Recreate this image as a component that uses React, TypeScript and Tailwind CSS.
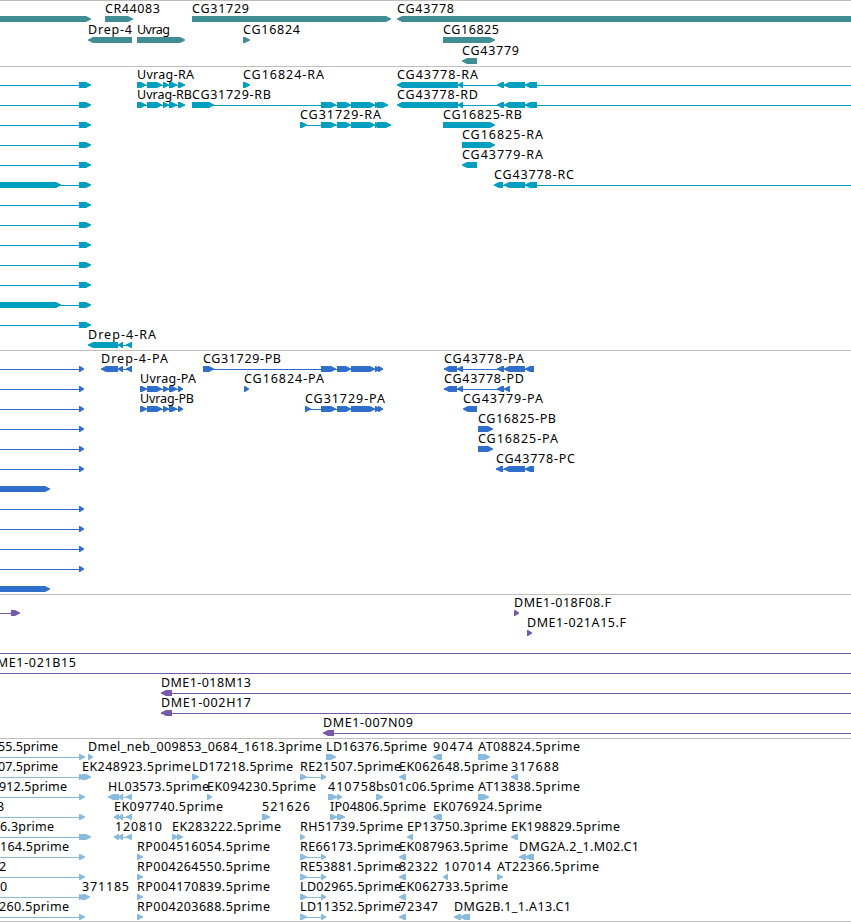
type Exon = [start: number, end: number];
type Label = [x: number, end: number, text: string];

interface Feature {
  dir: 1 | -1;
  exons: Exon[];
  // intron line, when it runs beyond or between the exons
  line?: Exon;
}

interface Row {
  labels?: Label[];
  features?: Feature[];
}

interface TrackProps {
  color: string;
  rows: Row[];
  className: string;
  pitch?: number;
}

const VIEW_WIDTH = 851;

const fwd = (exons: Exon[], line?: Exon): Feature => ({ dir: 1, exons, line });
const rev = (exons: Exon[], line?: Exon): Feature => ({ dir: -1, exons, line });

const genes: Row[] = [
  {
    labels: [[105, 160, 'CR44083'], [192, 249, 'CG31729'], [397, 454, 'CG43778']],
    features: [fwd([[-5, 91]]), fwd([[105, 133]]), fwd([[192, 391]]), rev([[397, 860]])],
  },
  {
    labels: [[88, 132, 'Drep-4'], [137, 170, 'Uvrag'], [243, 300, 'CG16824'], [443, 499, 'CG16825']],
    features: [rev([[88, 132]]), fwd([[137, 185]]), fwd([[243, 250]]), fwd([[443, 495]])],
  },
  {
    labels: [[462, 519, 'CG43779']],
    features: [rev([[462, 477]])],
  },
];

const leftRna = fwd([[79, 91]], [0, 79]);
const leftRnaLong = fwd([[-5, 61], [79, 91]], [0, 79]);
const uvragRna = fwd([[137, 146], [147, 162], [163, 169], [169, 177], [178, 185]], [137, 185]);
const cg43778Rna = rev([[397, 458], [458, 463], [497, 504], [504, 525], [525, 537]], [458, 851]);

const transcripts: Row[] = [
  {
    labels: [[137, 194, 'Uvrag-RA'], [243, 324, 'CG16824-RA'], [397, 478, 'CG43778-RA']],
    features: [leftRna, uvragRna, fwd([[243, 250]]), cg43778Rna],
  },
  {
    labels: [[137, 192, 'Uvrag-RB'], [192, 271, 'CG31729-RB'], [397, 478, 'CG43778-RD']],
    features: [
      leftRna,
      uvragRna,
      fwd([[192, 214], [321, 336], [337, 351], [351, 375], [375, 378], [377, 388]], [192, 388]),
      cg43778Rna,
    ],
  },
  {
    labels: [[300, 381, 'CG31729-RA'], [443, 522, 'CG16825-RB']],
    features: [
      leftRna,
      fwd([[300, 307], [321, 336], [337, 351], [351, 375], [375, 378], [377, 391]], [300, 391]),
      fwd([[443, 495]]),
    ],
  },
  { labels: [[462, 543, 'CG16825-RA']], features: [leftRna, fwd([[462, 495]])] },
  { labels: [[462, 543, 'CG43779-RA']], features: [leftRna, rev([[462, 477]])] },
  {
    labels: [[494, 574, 'CG43778-RC']],
    features: [leftRnaLong, rev([[494, 503], [504, 525], [525, 537]], [494, 851])],
  },
  { features: [leftRna] },
  { features: [leftRna] },
  { features: [leftRna] },
  { features: [leftRna] },
  { features: [leftRna] },
  { features: [leftRnaLong] },
  { features: [leftRna] },
  {
    labels: [[88, 156, 'Drep-4-RA']],
    features: [rev([[88, 118], [118, 123], [126, 132]], [88, 132])],
  },
];

const leftCds = fwd([[79, 84]], [0, 79]);
const leftCdsLong = fwd([[-5, 50]]);
const uvragCds = fwd([[140, 147], [147, 162], [163, 169], [169, 177], [178, 183]], [140, 183]);

const proteins: Row[] = [
  {
    labels: [[101, 168, 'Drep-4-PA'], [203, 281, 'CG31729-PB'], [444, 524, 'CG43778-PA']],
    features: [
      leftCds,
      rev([[101, 118], [118, 123], [126, 132]], [101, 132]),
      fwd([[203, 214], [321, 336], [337, 351], [351, 375], [375, 380], [378, 383]], [203, 383]),
      rev([[444, 457], [457, 463], [497, 504], [504, 525], [525, 534]], [444, 534]),
    ],
  },
  {
    labels: [[140, 196, 'Uvrag-PA'], [244, 324, 'CG16824-PA'], [444, 524, 'CG43778-PD']],
    features: [
      leftCds,
      uvragCds,
      fwd([[244, 249]]),
      rev([[444, 457], [457, 463], [497, 504], [504, 510]], [444, 510]),
    ],
  },
  {
    labels: [[140, 194, 'Uvrag-PB'], [305, 385, 'CG31729-PA'], [463, 543, 'CG43779-PA']],
    features: [
      leftCds,
      uvragCds,
      fwd([[305, 311], [321, 336], [337, 351], [351, 375], [375, 380], [378, 383]], [305, 383]),
      rev([[463, 477]]),
    ],
  },
  { labels: [[478, 556, 'CG16825-PB']], features: [leftCds, fwd([[478, 493]])] },
  { labels: [[478, 558, 'CG16825-PA']], features: [leftCds, fwd([[478, 493]])] },
  {
    labels: [[496, 575, 'CG43778-PC']],
    features: [leftCds, rev([[496, 503], [504, 525], [525, 534]], [496, 534])],
  },
  { features: [leftCdsLong] },
  { features: [leftCds] },
  { features: [leftCds] },
  { features: [leftCds] },
  { features: [leftCds] },
  { features: [leftCdsLong] },
];

const clones: Row[] = [
  {
    labels: [[514, 611, 'DME1-018F08.F']],
    features: [fwd([[11, 20]], [0, 11]), fwd([[514, 519]])],
  },
  { labels: [[527, 626, 'DME1-021A15.F']], features: [fwd([[527, 532]])] },
  { features: [fwd([], [0, 851])] },
  { labels: [[-13, 76, 'DME1-021B15']], features: [fwd([], [0, 851])] },
  { labels: [[161, 251, 'DME1-018M13']], features: [rev([[161, 172]], [161, 851])] },
  { labels: [[161, 251, 'DME1-002H17']], features: [rev([[161, 172]], [161, 851])] },
  { labels: [[323, 413, 'DME1-007N09']], features: [rev([[323, 334]], [323, 851])] },
];

const leftEst = fwd([[79, 85]], [0, 79]);
const re300 = fwd([[300, 307], [321, 326]], [300, 326]);
const ek399 = rev([[399, 406]]);
const rp137 = fwd([[137, 143]]);

const ests: Row[] = [
  {
    labels: [
      [-2, 58, '55.5prime'],
      [88, 322, 'Dmel_neb_009853_0684_1618.3prime'],
      [326, 427, 'LD16376.5prime'],
      [433, 473, '90474'],
      [478, 580, 'AT08824.5prime'],
    ],
    features: [leftEst, fwd([[88, 93]]), fwd([[326, 336]]), rev([[433, 442]]), fwd([[478, 490]])],
  },
  {
    labels: [
      [-2, 58, '07.5prime'],
      [82, 191, 'EK248923.5prime'],
      [192, 293, 'LD17218.5prime'],
      [300, 401, 'RE21507.5prime'],
      [399, 508, 'EK062648.5prime'],
      [511, 559, '317688'],
    ],
    features: [
      fwd([[79, 85], [82, 91]], [0, 79]),
      fwd([[192, 199]]),
      re300,
      ek399,
      rev([[511, 518]]),
    ],
  },
  {
    labels: [
      [-1, 67, '912.5prime'],
      [108, 209, 'HL03573.5prime'],
      [207, 316, 'EK094230.5prime'],
      [328, 376, '410758'],
      [376, 474, 'bs01c06.5prime'],
      [478, 580, 'AT13838.5prime'],
    ],
    features: [
      leftEst,
      rev([[108, 119], [118, 123], [126, 132]], [108, 132]),
      fwd([[207, 212]]),
      fwd([[328, 337], [337, 342]], [328, 342]),
      fwd([[376, 383]]),
      fwd([[478, 489]]),
    ],
  },
  {
    labels: [
      [-3, 5, '3'],
      [114, 223, 'EK097740.5prime'],
      [262, 310, '521626'],
      [330, 426, 'IP04806.5prime'],
      [433, 542, 'EK076924.5prime'],
    ],
    features: [
      leftEst,
      rev([[114, 119], [118, 123], [126, 132]], [114, 132]),
      fwd([[262, 270]]),
      fwd([[330, 337], [337, 345]], [330, 345]),
      rev([[433, 442]]),
    ],
  },
  {
    labels: [
      [0, 54, '6.3prime'],
      [115, 162, '120810'],
      [172, 281, 'EK283222.5prime'],
      [300, 403, 'RH51739.5prime'],
      [407, 507, 'EP13750.3prime'],
      [511, 620, 'EK198829.5prime'],
    ],
    features: [
      fwd([[79, 91]], [0, 79]),
      rev([[114, 119], [118, 123], [126, 132]], [114, 132]),
      fwd([[172, 178], [177, 183]]),
      fwd([[300, 305]]),
      rev([[407, 413]]),
      rev([[511, 518]]),
    ],
  },
  {
    labels: [
      [0, 69, '164.5prime'],
      [137, 270, 'RP004516054.5prime'],
      [300, 401, 'RE66173.5prime'],
      [399, 508, 'EK087963.5prime'],
      [519, 639, 'DMG2A.2_1.M02.C1'],
    ],
    features: [leftEst, rp137, re300, ek399, rev([[519, 526], [525, 534]], [519, 534])],
  },
  {
    labels: [
      [-1, 7, '2'],
      [137, 270, 'RP004264550.5prime'],
      [300, 401, 'RE53881.5prime'],
      [399, 438, '82322'],
      [444, 491, '107014'],
      [497, 599, 'AT22366.5prime'],
    ],
    features: [leftEst, rp137, re300, ek399, rev([[443, 448]]), fwd([[497, 503]])],
  },
  {
    labels: [
      [0, 8, '0'],
      [82, 129, '371185'],
      [137, 270, 'RP004170839.5prime'],
      [300, 401, 'LD02965.5prime'],
      [399, 508, 'EK062733.5prime'],
    ],
    features: [fwd([[79, 85], [82, 90]], [0, 79]), rp137, re300, ek399],
  },
  {
    labels: [
      [-1, 69, '260.5prime'],
      [137, 270, 'RP004203688.5prime'],
      [300, 401, 'LD11352.5prime'],
      [399, 438, '72347'],
      [454, 571, 'DMG2B.1_1.A13.C1'],
    ],
    features: [leftEst, rp137, re300, ek399, rev([[454, 461], [460, 470]], [454, 470])],
  },
];

// box with a 5px arrow head on the 3' side
function exonPoints([start, end]: Exon, dir: 1 | -1, y: number) {
  const head = Math.min(5, end - start - 1);
  if (dir === 1) {
    const neck = end - head;
    return `${start},${y} ${neck},${y} ${end},${y + 2.4} ${end},${y + 3.6} ${neck},${y + 6} ${start},${y + 6}`;
  }
  const neck = start + head;
  return `${end},${y} ${neck},${y} ${start},${y + 2.4} ${start},${y + 3.6} ${neck},${y + 6} ${end},${y + 6}`;
}

function Track({ color, rows, className, pitch = 20 }: TrackProps) {
  return (
    <section className={`w-full shrink-0 overflow-hidden border-t border-[#bebebe] ${className}`}>
      <svg width={VIEW_WIDTH} height="100%" className="block">
        {rows.map((row, i) => {
          const y = 15 + i * pitch;
          return (
            <g key={i}>
              <g fill={color}>
                {row.features?.map((f, j) => (
                  <g key={j}>
                    {f.line && (
                      <rect x={f.line[0]} y={y + 3} width={f.line[1] - f.line[0]} height={1} />
                    )}
                    {f.exons.map((exon) => (
                      <polygon key={exon[0]} points={exonPoints(exon, f.dir, y)} />
                    ))}
                  </g>
                ))}
              </g>
              {row.labels?.map(([x, end, text]) => (
                <text key={x} x={x} y={y - 3} textLength={end - x} fill="#000">
                  {text}
                </text>
              ))}
            </g>
          );
        })}
      </svg>
    </section>
  );
}

export default function App() {
  return (
    <main className="flex h-[922px] w-[851px] flex-col overflow-hidden border-b border-[#bebebe] bg-white font-['Noto_Sans','DejaVu_Sans',sans-serif] text-[12.5px]">
      <Track color="#408e94" rows={genes} pitch={21} className="h-[66px]" />
      <Track color="#009ebf" rows={transcripts} className="h-[284px]" />
      <Track color="#306ecb" rows={proteins} className="h-[244px]" />
      <Track color="#7659a8" rows={clones} className="h-[144px]" />
      <Track color="#88bbdd" rows={ests} className="h-[183px]" />
    </main>
  );
}
